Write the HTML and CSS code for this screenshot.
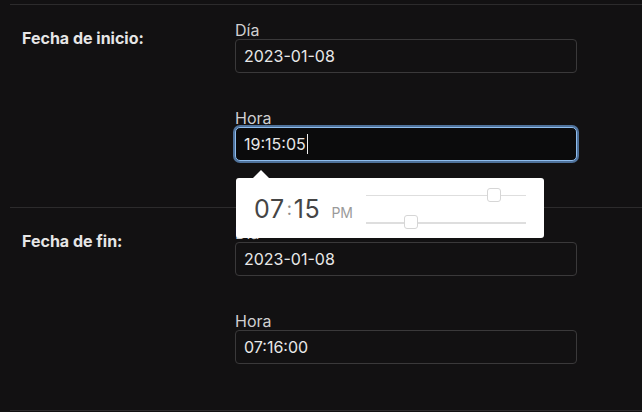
FILE: index.html
```html
<!DOCTYPE html>
<html lang="es">
<head>
<meta charset="utf-8">
<title>Fechas</title>
<link rel="stylesheet" href="styles.css">
</head>
<body>
<div class="form">
  <section class="section">
    <div class="section-label">Fecha de inicio:</div>
    <div class="fields">
      <div class="field">
        <div class="field-label">Día</div>
        <div class="input">2023-01-08</div>
      </div>
      <div class="field">
        <div class="field-label">Hora</div>
        <div class="input focused">19:15:05<span class="caret"></span></div>
        <div class="picker">
          <div class="picker-time">
            <span class="t-num">07</span><span class="t-sep">:</span><span class="t-num">15</span><span class="t-ampm">PM</span>
          </div>
          <div class="picker-sliders">
            <div class="track track-hour"><span class="handle" style="left:121px"></span></div>
            <div class="track track-min"><span class="handle" style="left:38px"></span></div>
          </div>
        </div>
      </div>
    </div>
  </section>
  <section class="section">
    <div class="section-label">Fecha de fin:</div>
    <div class="fields">
      <div class="field">
        <div class="field-label">Día</div>
        <div class="input">2023-01-08</div>
      </div>
      <div class="field">
        <div class="field-label">Hora</div>
        <div class="input">07:16:00</div>
      </div>
    </div>
  </section>
</div>
</body>
</html>
```
FILE: styles.css
```css
* { box-sizing: border-box; }
html, body {
  margin: 0;
  background: #121112;
}
body {
  font-family: Inter, "Noto Sans", sans-serif;
  color: #e4e4e4;
  width: 642px;
  height: 412px;
  overflow: hidden;
}
.form {
  padding-top: 4px;
  padding-left: 10px;
}
.section {
  display: flex;
  border-top: 1px solid #2c2b2c;
  padding: 16px 0 46px 12px;
}
.section:last-child {
  border-bottom: 1px solid #2c2b2c;
}
.section-label {
  width: 213px;
  flex: none;
  font-size: 16px;
  font-weight: 700;
  color: #e6e6e6;
  padding-top: 8px;
  line-height: 19px;
}
.fields {
  width: 342px;
  display: flex;
  flex-direction: column;
  gap: 36px;
}
.field {
  position: relative;
}
.field-label {
  font-size: 16px;
  line-height: 18px;
  color: #d0d0d0;
}
.input {
  height: 34px;
  border: 1px solid #3a393a;
  border-radius: 4px;
  padding: 0 8px;
  font-size: 16px;
  line-height: 32px;
  color: #e8e8e8;
  display: flex;
  align-items: center;
}
.input.focused {
  background: #0b0b0c;
  border-color: #8fbdee;
  box-shadow: 0 0 0 2px #4f729b;
  border-radius: 5px;
}
.caret {
  display: inline-block;
  width: 1px;
  height: 20px;
  background: #f0f0f0;
  margin-left: 1px;
}
.picker {
  position: absolute;
  left: 1px;
  top: calc(100% + 17px);
  width: 308px;
  height: 60px;
  background: #ffffff;
  border-radius: 3px;
  display: flex;
  align-items: center;
  padding: 0 18px;
  z-index: 2;
}
.picker::before {
  content: "";
  position: absolute;
  left: 17px;
  top: -8px;
  border-left: 8px solid transparent;
  border-right: 8px solid transparent;
  border-bottom: 8px solid #ffffff;
}
.picker-time {
  width: 112px;
  flex: none;
  display: flex;
  align-items: baseline;
  color: #454545;
  margin-top: 2px;
}
.t-num {
  font-size: 25px;
  font-weight: 400;
  letter-spacing: 0.6px;
}
.t-sep {
  font-size: 18px;
  color: #8a8a8a;
  margin: 0 2px;
  position: relative;
  top: -3px;
}
.t-ampm {
  font-size: 14px;
  color: #9a9a9a;
  margin-left: 11px;
}
.picker-sliders {
  width: 160px;
  display: flex;
  flex-direction: column;
  gap: 26px;
  margin-left: auto;
  margin-top: 2px;
}
.track {
  position: relative;
  height: 1px;
  background: #dedede;
}
.track-min {
  height: 2px;
}
.handle {
  position: absolute;
  top: -7px;
  width: 14px;
  height: 14px;
  background: #ffffff;
  border: 1px solid #d6d6d6;
  border-radius: 3px;
}
```
